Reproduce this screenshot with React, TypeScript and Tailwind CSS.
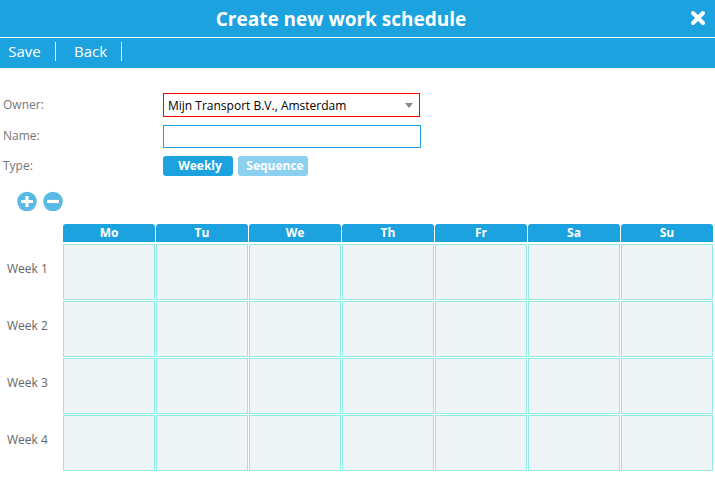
import { useState } from "react";

const days = ["Mo", "Tu", "We", "Th", "Fr", "Sa", "Su"];

const typeButton = "h-5 w-[70px] rounded-[3px] pl-1 text-xs font-bold text-white";

export default function App() {
  const [type, setType] = useState("weekly");
  const [weeks, setWeeks] = useState(4);

  return (
    <main className="bg-white font-['Open_Sans','Noto_Sans',sans-serif] text-xs text-[#777777]">
      <header className="bg-[#1ca2de] text-white">
        <div className="flex h-[38px] items-center border-b border-white">
          <h1 className="flex-1 pt-0.5 text-center text-[19px] font-bold">Create new work schedule</h1>
          <button type="button" aria-label="Close" className="flex h-8 w-[33px] items-center justify-center pr-0.5 pb-0.5">
            <svg viewBox="0 0 16 16" className="h-4 w-4" fill="none" stroke="currentColor" strokeWidth="4" strokeLinecap="round">
              <path d="M3 3 13 13M13 3 3 13" />
            </svg>
          </button>
        </div>
        <nav className="flex h-[30px] items-start pt-1 text-[15px] leading-[19px]">
          <button type="button" className="w-14 border-r border-white pr-1.5 text-center">Save</button>
          <button type="button" className="w-[66px] border-r border-white pl-1 text-center">Back</button>
        </nav>
      </header>

      <form className="pt-[25px]" onSubmit={(e) => e.preventDefault()}>
        <div className="flex h-8 items-start">
          <label htmlFor="owner" className="w-[163px] pl-[3px] leading-6">Owner:</label>
          <div className="grid w-[257px] items-center">
            <select
              id="owner"
              className="col-start-1 row-start-1 h-6 w-full appearance-none border border-[#ff0000] bg-white pt-px pl-1 text-black"
            >
              <option>Mijn Transport B.V., Amsterdam</option>
            </select>
            <svg viewBox="0 0 8 5" className="pointer-events-none col-start-1 row-start-1 mr-[7px] h-[5px] w-2 justify-self-end fill-[#888888]">
              <path d="M0 0H8L4 5Z" />
            </svg>
          </div>
        </div>
        <div className="flex h-[31px] items-start">
          <label htmlFor="name" className="w-[163px] pl-[3px] leading-[22px]">Name:</label>
          <input id="name" type="text" className="h-[23px] w-[258px] border border-[#1ca2de] px-1 text-black" />
        </div>
        <div className="flex items-start" role="group" aria-labelledby="type-label">
          <span id="type-label" className="w-[163px] pl-[3px] leading-5">Type:</span>
          <div className="flex gap-[5px]">
            <button
              type="button"
              onClick={() => setType("weekly")}
              className={`${typeButton} ${type === "weekly" ? "bg-[#1ca2de]" : "bg-[#8bd0ef]"}`}
            >
              Weekly
            </button>
            <button
              type="button"
              onClick={() => setType("sequence")}
              className={`${typeButton} ${type === "sequence" ? "bg-[#1ca2de]" : "bg-[#8bd0ef]"}`}
            >
              Sequence
            </button>
          </div>
        </div>
      </form>

      <div className="flex gap-[6px] pt-[15px] pb-3 pl-[17px]">
        <button type="button" aria-label="Add week" onClick={() => setWeeks(weeks + 1)}>
          <svg viewBox="0 0 20 20" className="block h-5 w-5">
            <circle cx="10" cy="10.5" r="9.8" fill="#58b9e6" />
            <path d="M10 5V16M4 10.5H16" stroke="white" strokeWidth="3.2" />
          </svg>
        </button>
        <button type="button" aria-label="Remove week" onClick={() => setWeeks(Math.max(1, weeks - 1))}>
          <svg viewBox="0 0 20 20" className="block h-5 w-5">
            <circle cx="10" cy="10.5" r="9.8" fill="#58b9e6" />
            <path d="M4 10.5H16" stroke="white" strokeWidth="3.2" />
          </svg>
        </button>
      </div>

      <div className="pr-px">
        <table className="w-full table-fixed border-separate border-spacing-px">
          <thead>
            <tr>
              <td className="w-[61px] p-0" />
              {days.map((day) => (
                <th key={day} scope="col" className="p-0 pb-px">
                  <div className="h-[18px] rounded-t-[3px] bg-[#1ca2de] text-center leading-[18px] font-bold text-white">{day}</div>
                </th>
              ))}
            </tr>
          </thead>
          <tbody>
            {Array.from({ length: weeks }, (_, i) => (
              <tr key={i} className="h-14">
                <th scope="row" className="p-0 pr-1 pb-[6px] pl-[6px] text-left font-normal text-[#666666]">Week {i + 1}</th>
                {days.map((day) => (
                  <td key={day} className="border border-[#93ece4] bg-[#eff4f7] p-0" />
                ))}
              </tr>
            ))}
          </tbody>
        </table>
      </div>
    </main>
  );
}
